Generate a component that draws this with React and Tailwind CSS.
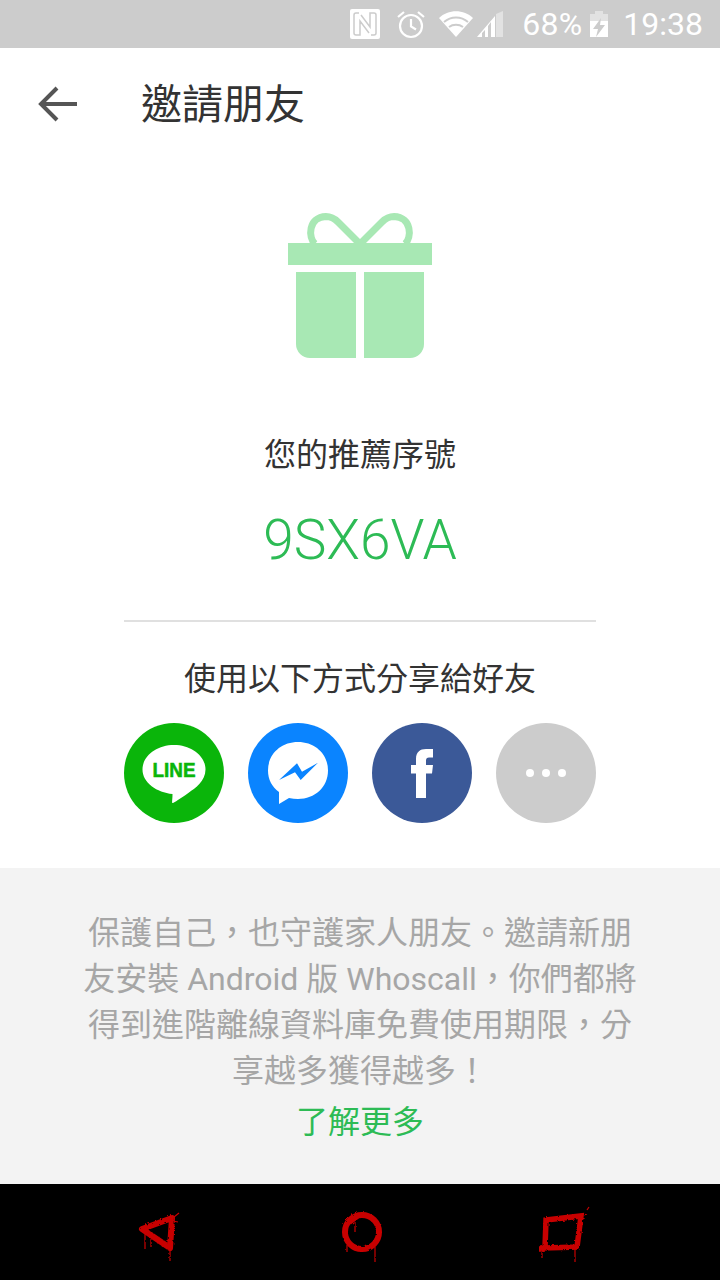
const cjk = "font-['Roboto','Noto_Sans_CJK_TC',sans-serif]";

const StatusBar = () => (
    <div className="h-12 bg-[#cccccc] flex items-center justify-end text-white font-['Roboto',sans-serif] pr-[17px]">
        <svg width="32" height="32" viewBox="0 0 32 32" className="mr-[14px]">
            <rect x="1" y="1" width="30" height="30" rx="2" fill="#fff" />
            <path fill="none" stroke="#cccccc" strokeWidth="1.500" d="M10 5H7a2 2 0 0 0-2 2v18a2 2 0 0 0 2 2h4V13l9 12M22 27h3a2 2 0 0 0 2-2V7a2 2 0 0 0-2-2h-4v14L12 7" />
        </svg>
        <svg width="32" height="32" viewBox="0 0 32 32" fill="none" stroke="#fff" strokeWidth="2.200" className="mr-[12px]">
            <circle cx="16" cy="18" r="11" />
            <path d="M16 11v7.500l5 3M3 9l6-5M29 9l-6-5" />
        </svg>
        <svg width="34" height="28" viewBox="0 0 34 28" className="mr-[3px]">
            <path fill="#fff" d="M17 27L0 8c9-9 25-9 34 0z" />
            <path fill="none" stroke="#cccccc" strokeWidth="2" d="M5 12c7-6 17-6 24 0M10 17c4-3 10-3 14 0" />
        </svg>
        <svg width="28" height="28" viewBox="0 0 28 28" className="mr-[18px]">
            <path fill="#e2e2e2" d="M20 4l7-3v26h-7z" />
            <path fill="#fff" d="M1 27L19 6v21h-4V12l-3 4v11H9v-7l-3 3v4z" />
        </svg>
        <span className="text-[32px] leading-none mr-[7px] tracking-[0.2px]">68%</span>
        <svg width="20" height="28" viewBox="0 0 20 28" className="mr-[14px]">
            <path fill="#e2e2e2" d="M6 1h8v3h5v7H1V4h5z" />
            <path fill="#fff" d="M1 11h18v16H1z" />
            <path fill="#cccccc" d="M12 8l-8 11h5l-2 8 9-12h-5z" />
        </svg>
        <span className="text-[32px] leading-none">19:38</span>
    </div>
);

const Gift = () => (
    <svg width="144" height="144" viewBox="0 0 144 144" className="block overflow-visible">
        <path
            fill="none"
            stroke="#a8e8b4"
            strokeWidth="7"
            d="M27 30C20 24 20 3 38 2.500C44 2.500 47 5 50 8L72 30L94 8C97 5 100 2.500 106 2.500C124 3 124 24 117 30"
        />
        <rect x="0" y="29" width="144" height="22" fill="#a8e8b4" />
        <path fill="#a8e8b4" d="M8 58h60v86H22a14 14 0 0 1-14-14zM76 58h60v72a14 14 0 0 1-14 14H76z" />
    </svg>
);

const ShareButtons = () => (
    <div className="flex gap-6">
        <button className="w-[100px] h-[100px] rounded-full bg-[#0ab50a] flex items-center justify-center">
            <svg width="100" height="100" viewBox="0 0 100 100">
                <path fill="#fff" d="M50 22c17.500 0 31.500 11 31.500 24.500 0 12-11 19-16.500 23-4 3-13 9-16 10.500-1 .5-1-1-.8-3 .2-2 .3-4 .3-6C33 69.500 18.500 60 18.500 46.500 18.500 33 32.500 22 50 22z" />
                <text x="50" y="54" textAnchor="middle" textLength="43" lengthAdjust="spacingAndGlyphs" fontFamily="Liberation Sans" fontWeight="700" fontSize="21" fill="#0ab50a" stroke="#0ab50a" strokeWidth="0.6">LINE</text>
            </svg>
        </button>
        <button className="w-[100px] h-[100px] rounded-full bg-[#0a84ff] flex items-center justify-center">
            <svg width="100" height="100" viewBox="0 0 100 100">
                <path fill="#fff" d="M50 19c17 0 30 12 30 28.500S67 76 50 76c-3 0-6-.4-9-1l-10 6V69c-7-5-11-12.500-11-21.500C20 31 33 19 50 19z" />
                <path fill="#0a84ff" d="M31 57L49 40.300 54 48.700 70 39.700 52.700 57 47 49.300z" />
            </svg>
        </button>
        <button className="w-[100px] h-[100px] rounded-full bg-[#3b5998] flex items-center justify-center">
            <svg width="100" height="100" viewBox="0 0 100 100">
                <path fill="#fff" d="M44 75V50.500h-5V42h5v-6c0-7 4-10 10-10h7v8.500h-4c-2 0-3 1-3 3V42h7l-1 8.500h-6V75z" />
            </svg>
        </button>
        <button className="w-[100px] h-[100px] rounded-full bg-[#cccccc] flex items-center justify-center gap-2">
            <span className="w-2 h-2 rounded-full bg-white"></span>
            <span className="w-2 h-2 rounded-full bg-white"></span>
            <span className="w-2 h-2 rounded-full bg-white"></span>
        </button>
    </div>
);

const RoughFilter = () => (
    <svg width="0" height="0" className="absolute">
        <filter id="rough" x="-20%" y="-20%" width="140%" height="140%">
            <feTurbulence type="fractalNoise" baseFrequency="0.35" numOctaves="2" seed="4" />
            <feDisplacementMap in="SourceGraphic" scale="3" />
            <feGaussianBlur stdDeviation="0.5" />
        </filter>
    </svg>
);

const NavBar = () => (
    <div className="h-24 bg-black flex items-center justify-between pl-[130px] pr-[128px]">
        <RoughFilter />
        <svg width="60" height="70" viewBox="0 0 60 70" fill="none" stroke="#c80000" filter="url(#rough)">
            <path strokeWidth="6" strokeLinejoin="round" d="M12 32L42 21 40 51z" />
            <path strokeWidth="1.200" d="M40 51v13M15 38v14M21 42v8M44 20l5-4M43 24l5 1" />
        </svg>
        <svg width="60" height="70" viewBox="0 0 60 70" fill="none" stroke="#c80000" filter="url(#rough)">
            <circle cx="31" cy="35" r="17" strokeWidth="6" />
            <path strokeWidth="6" d="M18 25l8-6" />
            <path strokeWidth="1.200" d="M44 50v15M16 48v8M24 25v10M34 48l2 2" />
        </svg>
        <svg width="60" height="70" viewBox="0 0 60 70" fill="none" stroke="#c80000" filter="url(#rough)">
            <path strokeWidth="5.500" d="M14 23L49 19 45 50 13 51zM7 52h6" />
            <path strokeWidth="1.200" d="M43 51v14M10 53v8M47 22v16M55 13l2-3M52 18l3-1" />
        </svg>
    </div>
);

const App = () => {
    return (
        <div className={`w-[720px] h-[1280px] flex flex-col bg-white overflow-hidden ${cjk}`}>
            <StatusBar />
            <div className="h-28 flex items-center">
                <svg width="40" height="36" viewBox="0 0 40 36" fill="none" stroke="#555555" strokeWidth="4" className="ml-[38px]">
                    <path d="M39 18H4M19 2L3 18l16 16" />
                </svg>
                <h1 className="ml-[63px] pt-0.5 text-[41px] leading-none font-normal text-[#333333]">邀請朋友</h1>
            </div>
            <div className="flex flex-col items-center flex-1">
                <div className="mt-[54px]">
                    <Gift />
                </div>
                <p className="mt-[74px] text-[32px] leading-[46px] text-[#333333]">您的推薦序號</p>
                <p className="mt-[32px] text-[55px] leading-[60px] text-[#2dbb55] font-['Roboto',sans-serif] font-light">9SX6VA</p>
                <div className="mt-[50px] w-[472px] h-0.5 bg-[#e0e0e0]"></div>
                <p className="mt-[34px] text-[32px] leading-[46px] text-[#333333]">使用以下方式分享給好友</p>
                <div className="mt-[21px]">
                    <ShareButtons />
                </div>
                <div className="mt-[45px] w-full flex-1 bg-[#f3f3f3] flex flex-col items-center pt-[42px] text-[32px] leading-[46px] text-[#a6a6a6] text-center">
                    <p>{"保護自己\uFF0C也守護家人朋友。邀請新朋"}</p>
                    <p>{"友安裝 Android 版 Whoscall\uFF0C你們都將"}</p>
                    <p>{"得到進階離線資料庫免費使用期限\uFF0C分"}</p>
                    <p>{"享越多獲得越多\uFF01"}</p>
                    <a className="mt-[5px] text-[#2dbb55]">了解更多</a>
                </div>
            </div>
            <NavBar />
        </div>
    );
};

export default App;
